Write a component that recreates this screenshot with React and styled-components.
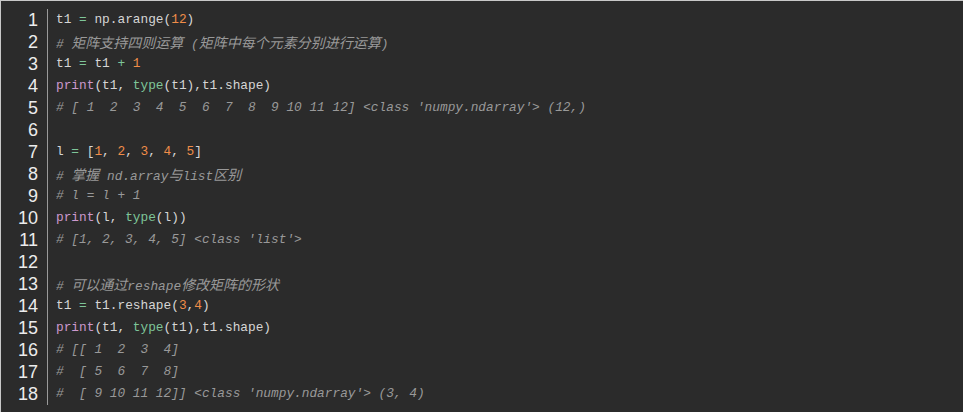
import React from 'react'
import styled, { createGlobalStyle } from 'styled-components'

const GlobalStyle = createGlobalStyle`
    html, body {
        margin: 0;
        padding: 0;
        background: #2b2b2b;
    }
`

const colors = {
    plain: '#d6d6d6',
    op: '#7ec699',
    num: '#f08d49',
    kw: '#cc99cd',
    builtin: '#7ec699',
    comment: '#999999',
}

// each line is a list of [kind, text]
const lines = [
    [['plain', 't1 '], ['op', '='], ['plain', ' np.arange('], ['num', '12'], ['plain', ')']],
    [['comment', '# 矩阵支持四则运算 (矩阵中每个元素分别进行运算)']],
    [['plain', 't1 '], ['op', '='], ['plain', ' t1 '], ['op', '+'], ['plain', ' '], ['num', '1']],
    [['kw', 'print'], ['plain', '(t1, '], ['builtin', 'type'], ['plain', '(t1),t1.shape)']],
    [['comment', "# [ 1  2  3  4  5  6  7  8  9 10 11 12] <class 'numpy.ndarray'> (12,)"]],
    [],
    [['plain', 'l '], ['op', '='], ['plain', ' ['], ['num', '1'], ['plain', ', '], ['num', '2'], ['plain', ', '], ['num', '3'], ['plain', ', '], ['num', '4'], ['plain', ', '], ['num', '5'], ['plain', ']']],
    [['comment', '# 掌握 nd.array与list区别']],
    [['comment', '# l = l + 1']],
    [['kw', 'print'], ['plain', '(l, '], ['builtin', 'type'], ['plain', '(l))']],
    [['comment', "# [1, 2, 3, 4, 5] <class 'list'>"]],
    [],
    [['comment', '# 可以通过reshape修改矩阵的形状']],
    [['plain', 't1 '], ['op', '='], ['plain', ' t1.reshape('], ['num', '3'], ['plain', ','], ['num', '4'], ['plain', ')']],
    [['kw', 'print'], ['plain', '(t1, '], ['builtin', 'type'], ['plain', '(t1),t1.shape)']],
    [['comment', '# [[ 1  2  3  4]']],
    [['comment', '#  [ 5  6  7  8]']],
    [['comment', "#  [ 9 10 11 12]] <class 'numpy.ndarray'> (3, 4)"]],
]

const splitCjk = (text) => text.split(/([\u3000-\u9fff\uff00-\uffef]+)/).filter(Boolean)
const isCjk = (s) => /[\u3000-\u9fff\uff00-\uffef]/.test(s)

function App() {
    return (
        <>
            <GlobalStyle />
            <Frame>
                <Gutter>
                    {lines.map((_, i) => (
                        <LineNo key={i}>{i + 1}</LineNo>
                    ))}
                </Gutter>
                <Code>
                    {lines.map((tokens, i) => (
                        <Line key={i}>
                            {tokens.map(([kind, text], j) => (
                                <Tok key={j} $kind={kind}>
                                    {splitCjk(text).map((part, k) =>
                                        isCjk(part) ? <Cjk key={k}>{part}</Cjk> : part
                                    )}
                                </Tok>
                            ))}
                        </Line>
                    ))}
                </Code>
            </Frame>
        </>
    )
}

export default App

const Frame = styled.div`
    box-sizing: border-box;
    width: 963px;
    height: 412px;
    background: #2b2b2b;
    border-top: 1px solid #c8c8c8;
    border-left: 1px solid #c8c8c8;
    display: flex;
    align-items: flex-start;
    padding-top: 8px;
`

const Gutter = styled.div`
    width: 47px;
    box-sizing: border-box;
    padding-right: 9px;
    border-right: 1px solid #9a9a9a;
    display: flex;
    flex-direction: column;
`

const LineNo = styled.div`
    height: 22px;
    line-height: 22px;
    text-align: right;
    font-family: "Liberation Sans", Arial, sans-serif;
    font-size: 18px;
    color: #ececec;
`

const Code = styled.div`
    padding-left: 8px;
    display: flex;
    flex-direction: column;
`

const Line = styled.div`
    height: 22px;
    line-height: 22px;
    white-space: pre;
    font-family: "Liberation Mono", "Noto Sans CJK SC", monospace;
    font-size: 12.8px;
`

const Tok = styled.span`
    color: ${p => colors[p.$kind]};
    font-style: ${p => (p.$kind === 'comment' ? 'italic' : 'normal')};
`

const Cjk = styled.span`
    font-family: "Noto Sans CJK SC", sans-serif;
    font-size: 14px;
`
